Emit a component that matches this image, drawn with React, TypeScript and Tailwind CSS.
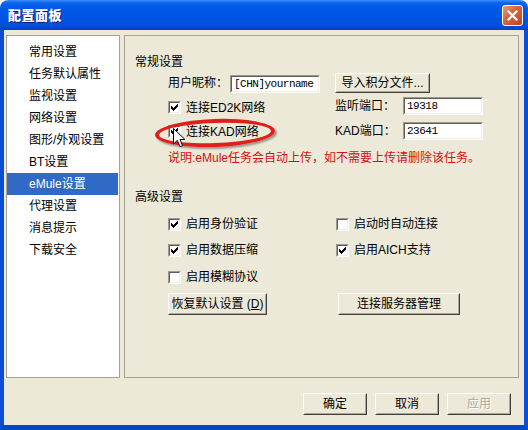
import React from "react";

const Check = ({ checked }: { checked?: boolean }) => (
  <span className="flex h-[13px] w-[13px] shrink-0 border border-t-[#9D9B8E] border-l-[#9D9B8E] border-b-white border-r-white">
    <span className="flex flex-1 items-center justify-center border border-t-[#5F5D54] border-l-[#5F5D54] border-b-[#F1EFE2] border-r-[#F1EFE2] bg-white">
      {checked && (
        <svg width="7" height="7" viewBox="0 0 7 7" className="block">
          <path d="M0 2h1v1h1v1h1v-1h1v-1h1v-1h1v-1h1v3h-1v1h-1v1h-1v1h-1v1h-1v-1h-1v-1h-1z" fill="#000" />
        </svg>
      )}
    </span>
  </span>
);

const CheckRow = ({ checked, label }: { checked?: boolean; label: string }) => (
  <div className="flex items-center gap-[5px]">
    <Check checked={checked} />
    <span className="whitespace-nowrap">{label}</span>
  </div>
);

const Field = ({ value, w }: { value: string; w: string }) => (
  <div className={`flex h-[18px] ${w} border border-t-[#9D9B8E] border-l-[#9D9B8E] border-b-white border-r-white`}>
    <div className="flex flex-1 items-center border border-t-[#5F5D54] border-l-[#5F5D54] border-b-[#F1EFE2] border-r-[#F1EFE2] bg-white pl-[2px] font-['Liberation_Mono',monospace] text-[11px] tracking-[-0.5px] text-black">
      {value}
    </div>
  </div>
);

const Btn = ({ children, w, h = "h-[22px]", disabled }: { children: React.ReactNode; w: string; h?: string; disabled?: boolean }) => (
  <div className={`flex ${w} ${h} border border-t-white border-l-white border-b-[#404040] border-r-[#404040] bg-[#ECE9D8]`}>
    <div
      className={`flex flex-1 items-center justify-center whitespace-nowrap border border-t-[#ECE9D8] border-l-[#ECE9D8] border-b-[#ACA899] border-r-[#ACA899] ${
        disabled ? "text-[#ACA899] [text-shadow:1px_1px_0_#fff]" : "text-black"
      }`}
    >
      {children}
    </div>
  </div>
);

const items = ["常用设置", "任务默认属性", "监视设置", "网络设置", "图形/外观设置", "BT设置", "eMule设置", "代理设置", "消息提示", "下载安全"];

export default function App() {
  return (
    <div className="h-[430px] w-[528px] bg-white font-['Liberation_Sans','Noto_Sans_CJK_SC',sans-serif] text-[12px] leading-[14px] text-black">
      <div className="flex h-full flex-col overflow-hidden rounded-t-[8px]">
        {/* Title bar */}
        <div className="flex h-[30px] shrink-0 items-center justify-between bg-[linear-gradient(180deg,#3D8FFF_0%,#0A62EC_10%,#0058E6_30%,#0054E3_60%,#0050DC_85%,#003FC4_100%)] pl-[8px] pr-[5px]">
          <span className="font-['Noto_Sans_CJK_SC',sans-serif] text-[13px] font-black leading-[16px] tracking-[0.5px] text-white [text-shadow:1px_1px_0_#0A1A7A]">
            配置面板
          </span>
          <div className="flex h-[21px] w-[21px] items-center justify-center rounded-[3px] border border-white bg-[linear-gradient(135deg,#ED9C7E_0%,#DA6440_40%,#C4441E_100%)]">
            <svg width="11" height="11" viewBox="0 0 11 11">
              <path d="M1.5 1.5L9.5 9.5M9.5 1.5L1.5 9.5" stroke="#fff" strokeWidth="2.2" strokeLinecap="square" />
            </svg>
          </div>
        </div>

        {/* Body */}
        <div className="flex flex-1 flex-col border-x-4 border-b-[5px] border-x-[#0A4ED8] border-b-[#0843CC] bg-[#ECE9D8]">
          <div className="flex gap-[4px] pl-[2px] pr-[5px] pt-[5px]">
            {/* List */}
            <div className="flex h-[343px] w-[114px] flex-col border border-[#A5A293] bg-white pr-[1px] pt-[5px]">
              {items.map((t) => (
                <div
                  key={t}
                  className={`flex h-[22px] shrink-0 items-center whitespace-nowrap pl-[22px] ${t === "eMule设置" ? "bg-[#316AC5] text-white" : ""}`}
                >
                  {t}
                </div>
              ))}
            </div>

            {/* Panel */}
            <div className="relative flex h-[343px] w-[395px] flex-col border border-[#A5A293]">
              <div className="mt-[18px] flex h-[16px] items-center pl-[10px]">常规设置</div>

              <div className="mt-[2px] flex h-[22px] items-center pl-[43px]">
                <div className="flex w-[167px] items-center">
                  <span className="w-[62px] whitespace-nowrap">用户昵称：</span>
                  <Field value="[CHN]yourname" w="w-[90px] mt-[2px]" />
                </div>
                <Btn w="w-[95px]" h="h-[20px]">导入积分文件...</Btn>
              </div>

              <div className="mt-[3px] flex h-[18px] items-center pl-[43px]">
                <div className="w-[167px] pt-[3px]">
                  <CheckRow checked label="连接ED2K网络" />
                </div>
                <span className="w-[68px] whitespace-nowrap">监听端口：</span>
                <Field value="19318" w="w-[80px]" />
              </div>

              <div className="mt-[7px] flex h-[18px] items-center pl-[43px]">
                <div className="w-[167px] pt-[1px]">
                  <CheckRow checked label="连接KAD网络" />
                </div>
                <span className="w-[68px] whitespace-nowrap">KAD端口：</span>
                <Field value="23641" w="w-[80px]" />
              </div>

              <div className="mt-[10px] flex h-[16px] items-center whitespace-nowrap pl-[43px] text-[#D41010]">
                说明:eMule任务会自动上传，如不需要上传请删除该任务。
              </div>

              <div className="mt-[23px] flex h-[16px] items-center pl-[10px]">高级设置</div>

              <div className="mt-[10px] flex h-[18px] items-center pl-[43px]">
                <div className="w-[168px]">
                  <CheckRow checked label="启用身份验证" />
                </div>
                <CheckRow label="启动时自动连接" />
              </div>
              <div className="mt-[8px] flex h-[18px] items-center pl-[43px]">
                <div className="w-[168px]">
                  <CheckRow checked label="启用数据压缩" />
                </div>
                <CheckRow checked label="启用AICH支持" />
              </div>
              <div className="mt-[9px] flex h-[18px] items-center pl-[43px]">
                <CheckRow label="启用模糊协议" />
              </div>

              <div className="mt-[7px] flex h-[22px] items-center pl-[43px]">
                <div className="w-[170px]">
                  <Btn w="w-[99px]">
                    恢复默认设置 (<span className="underline">D</span>)
                  </Btn>
                </div>
                <Btn w="w-[122px]">连接服务器管理</Btn>
              </div>

              {/* annotation ellipse */}
              <div className="pointer-events-none absolute left-[30px] top-[83px] h-[28px] w-[120px] -rotate-[2deg] rounded-[50%] border-[4px] border-[#E01E1A] shadow-[2px_2px_2px_rgba(0,0,0,0.35)]" />
              {/* cursor */}
              <svg className="pointer-events-none absolute left-[48px] top-[92px]" width="13" height="20" viewBox="0 0 13 20">
                <path d="M0.5 0.5 L0.5 16 L4.3 12.3 L7 18.7 L9.6 17.6 L7 11.5 L12 11.5 Z" fill="#fff" stroke="#000" strokeWidth="1" strokeLinejoin="miter" />
              </svg>
            </div>
          </div>

          <div className="mt-[15px] flex justify-end gap-[8px] pr-[13px]">
            <Btn w="w-[64px]">确定</Btn>
            <Btn w="w-[64px]">取消</Btn>
            <Btn w="w-[64px]" disabled>应用</Btn>
          </div>
        </div>
      </div>
    </div>
  );
}
